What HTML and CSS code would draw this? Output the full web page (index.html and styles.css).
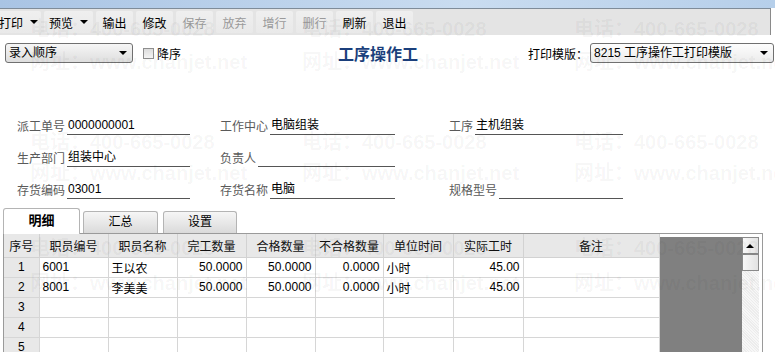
FILE: index.html
```html
<!DOCTYPE html>
<html lang="zh-CN">
<head>
    <meta charset="UTF-8">
    <title>工序操作工</title>
    <link rel="stylesheet" href="styles.css">
</head>
<body>
    <div class="page">
        <div class="titlebar"></div>
        <!-- 工具栏 -->
        <div class="toolbar">
            <a class="tb first">打印<i class="caret"></i></a>
            <a class="tb">预览<i class="caret"></i></a>
            <a class="tb">输出</a>
            <a class="tb">修改</a>
            <a class="tb off">保存</a>
            <a class="tb off">放弃</a>
            <a class="tb off">增行</a>
            <a class="tb off">删行</a>
            <a class="tb">刷新</a>
            <a class="tb">退出</a>
        </div>
        <!-- 标题行 -->
        <div class="head">
            <div class="combo sort">录入顺序<i class="caret"></i></div>
            <label class="chk"><span class="box"></span>降序</label>
            <h1 class="title">工序操作工</h1>
            <span class="tpl-label">打印模版：</span>
            <div class="combo tpl">8215 工序操作工打印模版<i class="caret"></i></div>
        </div>
        <!-- 表头 -->
        <div class="form">
            <div class="frow">
                <div class="field c1"><span class="lbl">派工单号</span><span class="val">0000000001</span></div>
                <div class="field c2"><span class="lbl">工作中心</span><span class="val">电脑组装</span></div>
                <div class="field c3"><span class="lbl">工序</span><span class="val">主机组装</span></div>
            </div>
            <div class="frow">
                <div class="field c1"><span class="lbl">生产部门</span><span class="val">组装中心</span></div>
                <div class="field c2"><span class="lbl">负责人</span><span class="val"></span></div>
            </div>
            <div class="frow">
                <div class="field c1"><span class="lbl">存货编码</span><span class="val">03001</span></div>
                <div class="field c2"><span class="lbl">存货名称</span><span class="val">电脑</span></div>
                <div class="field c3"><span class="lbl">规格型号</span><span class="val"></span></div>
            </div>
        </div>
        <!-- 页签 -->
        <div class="tabs">
            <div class="tab on">明细</div>
            <div class="tab">汇总</div>
            <div class="tab t3">设置</div>
        </div>
        <!-- 表体 -->
        <div class="grid-frame">
            <table class="grid">
                <colgroup>
                    <col style="width:35px"><col style="width:69px"><col style="width:69px">
                    <col style="width:69px"><col style="width:69px"><col style="width:68px">
                    <col style="width:70px"><col style="width:70px"><col style="width:136px">
                </colgroup>
                <thead>
                    <tr><th>序号</th><th>职员编号</th><th>职员名称</th><th>完工数量</th><th>合格数量</th><th>不合格数量</th><th>单位时间</th><th>实际工时</th><th>备注</th></tr>
                </thead>
                <tbody>
                    <tr><td class="no">1</td><td>6001</td><td>王以农</td><td class="num">50.0000</td><td class="num">50.0000</td><td class="num">0.0000</td><td>小时</td><td class="num">45.00</td><td></td></tr>
                    <tr><td class="no">2</td><td>8001</td><td>李美美</td><td class="num">50.0000</td><td class="num">50.0000</td><td class="num">0.0000</td><td>小时</td><td class="num">45.00</td><td></td></tr>
                    <tr><td class="no">3</td><td></td><td></td><td></td><td></td><td></td><td></td><td></td><td></td></tr>
                    <tr><td class="no">4</td><td></td><td></td><td></td><td></td><td></td><td></td><td></td><td></td></tr>
                    <tr><td class="no">5</td><td></td><td></td><td></td><td></td><td></td><td></td><td></td><td></td></tr>
                </tbody>
            </table>
            <div class="blank"></div>
            <div class="vscroll">
                <div class="sbtn"><i class="up"></i></div>
                <div class="thumb"></div>
                <div class="track"></div>
            </div>
        </div>
        <!-- 水印 -->
        <div class="wm">
            <div class="wm-row r1"><span>电话：400-665-0028</span><span>电话：400-665-0028</span><span>电话：400-665-0028</span></div>
            <div class="wm-row r2"><span>网址：www.chanjet.net</span><span>网址：www.chanjet.net</span><span>网址：www.chanjet.net</span></div>
            <div class="wm-row r3"><span>电话：400-665-0028</span><span>电话：400-665-0028</span><span>电话：400-665-0028</span></div>
            <div class="wm-row r4"><span>网址：www.chanjet.net</span><span>网址：www.chanjet.net</span><span>网址：www.chanjet.net</span></div>
            <div class="wm-row r5"><span>电话：400-665-0028</span><span>电话：400-665-0028</span><span>电话：400-665-0028</span></div>
            <div class="wm-row r6"><span>网址：www.chanjet.net</span><span>网址：www.chanjet.net</span><span>网址：www.chanjet.net</span></div>
        </div>
    </div>
</body>
</html>
```

FILE: styles.css
```css
*{
    margin: 0;
    padding: 0;
    box-sizing: border-box;
}
body{
    background: #fff;
    font-family: "Liberation Sans", "Noto Sans CJK SC", sans-serif;
    font-size: 12px;
    color: #000;
}
.page{
    position: relative;
    width: 775px;
    height: 352px;
    overflow: hidden;
}
.titlebar{
    height: 8px;
    background: linear-gradient(to right, #a9c4e4, #c9dcf0 60%, #b6cfea);
}
/* 工具栏 */
.toolbar{
    display: flex;
    gap: 3px;
    width: 771px;
    height: 27px;
    padding-top: 2px;
    background: #e4e4e4;
    border-top: 1px solid #7f8c99;
    border-right: 1px solid #8a8a8a;
}
.tb{
    display: flex;
    align-items: center;
    justify-content: center;
    height: 22px;
    width: 37px;
    background: linear-gradient(#efefef, #e9e9e9);
    border-radius: 2px;
    cursor: default;
}
.tb.first{
    margin-left: -4px;
    width: 45px;
    justify-content: flex-start;
    padding-left: 3px;
    gap: 7px;
}
.tb:nth-child(2){
    width: 49px;
    gap: 7px;
}
.tb.off{
    color: #9a9a9a;
}
.caret{
    width: 0;
    height: 0;
    border-left: 4px solid transparent;
    border-right: 4px solid transparent;
    border-top: 4px solid #000;
}
/* 标题行 */
.head{
    display: flex;
    align-items: center;
    height: 20px;
    margin-top: 8px;
    padding-left: 5px;
}
.combo{
    position: relative;
    height: 20px;
    line-height: 18px;
    padding-left: 3px;
    border: 1px solid #707070;
    border-radius: 3px;
    background: linear-gradient(#f6f6f6, #dedede);
}
.combo .caret{
    position: absolute;
    right: 5px;
    top: 7px;
}
.sort{
    width: 128px;
}
.tpl{
    width: 184px;
    background: linear-gradient(#fdfdfd, #ececec);
}
.chk{
    display: flex;
    align-items: center;
    margin-left: 10px;
    gap: 3px;
}
.chk .box{
    width: 11px;
    height: 11px;
    border: 1px solid #8e8e8e;
    background: linear-gradient(#dcdcdc, #f4f4f4);
}
.title{
    margin-left: 157px;
    font-size: 16px;
    font-weight: bold;
    color: #1b3f7c;
}
.tpl-label{
    margin-left: 110px;
    margin-right: 2px;
}
/* 表头字段 */
.form{
    margin-top: 54px;
    padding-left: 17px;
    display: flex;
    flex-direction: column;
    gap: 14px;
}
.frow{
    display: flex;
    height: 18px;
}
.field{
    display: flex;
    align-items: flex-end;
    gap: 2px;
}
.c1{ width: 173px; margin-right: 30px; }
.c2{ width: 175px; margin-right: 54px; }
.c3{ width: 174px; }
.lbl{
    color: #5a5a5a;
    line-height: 16px;
    white-space: nowrap;
}
.val{
    flex: 1;
    height: 18px;
    line-height: 16px;
    border-bottom: 1px solid #555;
    padding-left: 1px;
}
/* 页签 */
.tabs{
    display: flex;
    align-items: flex-end;
    height: 25px;
    margin-top: 9px;
    padding-left: 3px;
}
.tab{
    width: 75px;
    height: 22px;
    line-height: 21px;
    text-align: center;
    margin-left: 3px;
    border: 1px solid #b4b4b4;
    border-bottom: none;
    border-radius: 3px 3px 0 0;
    background: linear-gradient(#f6f6f6, #dadada);
}
.tab.on{
    width: 77px;
    height: 26px;
    margin-left: 0;
    margin-bottom: -1px;
    line-height: 24px;
    background: #fff;
    font-weight: bold;
    font-size: 13px;
    position: relative;
    z-index: 1;
}
.tab.t3{
    width: 74px;
    margin-left: 5px;
}
/* 表体 */
.grid-frame{
    display: flex;
    align-items: flex-start;
    width: 760px;
    height: 120px;
    margin-left: 3px;
    border-top: 1px solid #9a9a9a;
    border-left: 1px solid #9a9a9a;
    border-right: 1px solid #9a9a9a;
    padding-right: 3px;
}
.grid{
    width: 655px;
    table-layout: fixed;
    border-collapse: collapse;
    flex: none;
}
.grid th{
    height: 23px;
    font-weight: normal;
    background: #e8e8e8;
    border-right: 1px solid #d2d2d2;
    border-bottom: 1px solid #d2d2d2;
    color: #111;
}
.grid td{
    height: 20px;
    padding: 0 3px;
    border-right: 1px solid #d6d6d6;
    border-bottom: 1px solid #d6d6d6;
    white-space: nowrap;
    overflow: hidden;
}
.grid td.no{
    text-align: center;
    background: #e8e8e8;
}
.grid td.num{
    text-align: right;
}
.blank{
    flex: none;
    width: 82px;
    height: 120px;
    margin-top: 3px;
    background: #808080;
}
.vscroll{
    flex: none;
    width: 17px;
    margin-top: 3px;
    display: flex;
    flex-direction: column;
}
.sbtn, .thumb{
    height: 17px;
    border: 1px solid #8a8a8a;
    background: linear-gradient(to right, #f8f8f8, #e2e2e2);
    display: flex;
    align-items: center;
    justify-content: center;
}
.up{
    width: 0;
    height: 0;
    border-left: 4px solid transparent;
    border-right: 4px solid transparent;
    border-bottom: 4px solid #000;
}
.track{
    height: 90px;
    background: repeating-linear-gradient(45deg, #f7f7f7 0 1px, #ececec 1px 2px);
}
/* 水印 */
.wm{
    position: absolute;
    top: 0;
    left: 0;
    right: 0;
    bottom: 0;
    padding-top: 19px;
    padding-left: 30px;
    pointer-events: none;
    font-size: 20px;
    font-weight: bold;
    line-height: 20px;
    color: rgba(0,0,0,.045);
}
.wm-row{
    display: flex;
    white-space: nowrap;
}
.wm-row span{
    width: 272px;
    flex: none;
}
.r2{ margin-top: 13px; }
.r3{ margin-top: 60px; }
.r4{ margin-top: 11px; }
.r5{ margin-top: 55px; }
.r6{ margin-top: 15px; }
```
